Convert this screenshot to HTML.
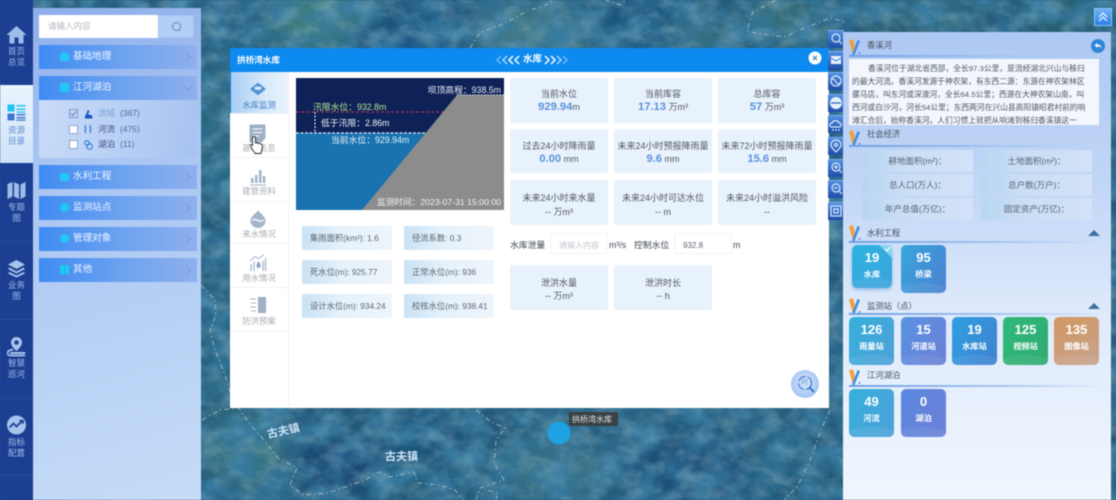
<!DOCTYPE html>
<html lang="zh">
<head>
<meta charset="utf-8">
<title>拱桥湾水库</title>
<style>
*{box-sizing:border-box;margin:0;padding:0}
html,body{width:1116px;height:500px;overflow:hidden;background:#235c80}
body{font-family:"Liberation Sans","Noto Sans CJK SC",sans-serif;position:relative}
#root{position:absolute;left:0;top:0;width:1116px;height:500px;overflow:hidden;filter:blur(.4px)}
.a{position:absolute}
.t{position:absolute;white-space:nowrap}
.nav{position:absolute;left:0;top:0;width:33px;height:500px;background:#1d3f93}
.nl{position:absolute;left:0;width:33px;text-align:center;color:#9dbbe6;font-size:8.5px;line-height:11px}
.nd{position:absolute;left:0;width:33px;height:1px;background:#2c4f9f}
.panel{position:absolute;left:33px;top:8px;width:168px;height:492px;background:linear-gradient(165deg,#8fafec 0%,#a9c5f2 30%,#c6dcf8 100%)}
.mi{position:absolute;left:39px;width:158px;height:24px;background:linear-gradient(90deg,#3f8bf2 0%,#6fa3f0 55%,#8fb0ee 100%);color:#eef6ff;font-size:9.6px;line-height:24px;padding-left:34px}
.mi i{position:absolute;left:21px;top:7px;width:9px;height:9px;background:#20c8f4;border-radius:2px}
.mi svg{position:absolute;right:6px;top:7px}
.cb{position:absolute;left:69px;width:9px;height:9px;background:#fff;border:1px solid #90a5cb}
.li{position:absolute;font-size:8.5px;color:#3a5487;white-space:nowrap;line-height:11px}
.modal{position:absolute;left:230px;top:48px;width:599px;height:360px;background:#fff}
.mh{position:absolute;left:0;top:0;width:599px;height:24px;background:#0c8af0}
.tab{position:absolute;left:0;width:58px;text-align:center;font-size:8.4px;color:#a9adb4;line-height:11px}
.tl{position:absolute;left:1px;width:57px;height:1px;background:#eef0f3}
.s{position:absolute;width:98px;background:#e8f2fc;border-radius:2px;text-align:center;color:#4f5661;font-size:9px;line-height:13px}
.s b{color:#5b92dc;font-size:11.2px;font-weight:700}
.s span{display:block;position:absolute;left:0;width:98px}
.mini{position:absolute;width:90px;height:24px;border-radius:2px;background:linear-gradient(90deg,#c8e2f6 0%,#e6f2fb 45%,#eef5fb 100%);font-size:8.3px;color:#5d6672;line-height:24px;padding-left:8px;white-space:nowrap}
.rp{position:absolute;left:843px;top:32px;width:268px;height:468px;background:linear-gradient(180deg,#adc8f3 0%,#c3d8f7 35%,#dfeafb 60%,#f0f6fe 100%)}
.tool{position:absolute;left:828px;width:16px;height:18px;background:linear-gradient(180deg,#4f8fe0,#1f4da6);border-top:1px solid #7cb0ee}
.hd{position:absolute;left:849px;font-size:8.3px;color:#47505e;white-space:nowrap;padding-left:18px;line-height:12px;height:12px}
.logo{position:absolute;left:849px;width:12px;height:16px}
.ln{position:absolute;left:849px;width:250px;height:1.5px;background:linear-gradient(90deg,#6fa0e4,#a5c4f0 60%,rgba(200,220,250,.2))}
.desc{position:absolute;left:849px;top:59px;width:250px;height:66px;background:#f3f7fd;overflow:hidden}
.desc div{position:absolute;white-space:nowrap;font-size:7.75px;color:#4d5562;line-height:12px}
.rc{position:absolute;height:22px;width:111px;background:linear-gradient(90deg,#b8d6f2 0%,#c9def5 35%,#d3e2f8 100%);color:#59626f;font-size:8.5px;line-height:22px;text-align:center}
.k{position:absolute;width:45px;height:48px;border-radius:5px;color:#fff;text-align:center;overflow:hidden}
.k b{position:absolute;left:0;top:5px;width:100%;font-size:13px;line-height:16px;font-weight:700}
.k span{position:absolute;left:0;top:24px;width:100%;font-size:8.2px;font-weight:700;line-height:12px}
.k:after{content:"";position:absolute;left:-5px;right:-5px;bottom:-8px;height:18px;border-radius:50%;background:rgba(255,255,255,.08)}
.tri{position:absolute;left:1088px;width:0;height:0;border-left:6px solid transparent;border-right:6px solid transparent;border-bottom:6px solid #3f6f9f}
</style>
</head>
<body>
<div id="root">

<!-- MAP -->
<svg class="a" style="left:0;top:0" width="1116" height="500" viewBox="0 0 1116 500">
<defs>
<filter id="bl" x="-30%" y="-30%" width="160%" height="160%"><feGaussianBlur stdDeviation="12"/></filter>
<filter id="tx" x="0" y="0" width="100%" height="100%">
<feTurbulence type="fractalNoise" baseFrequency=".05 .07" numOctaves="4" seed="7"/>
<feColorMatrix values="0 0 0 0 .42  0 0 0 0 .6  0 0 0 0 .62  1.8 0 0 0 -.72"/>
</filter>
<filter id="tx2" x="0" y="0" width="100%" height="100%">
<feTurbulence type="fractalNoise" baseFrequency=".035 .045" numOctaves="3" seed="21"/>
<feColorMatrix values="0 0 0 0 .04  0 0 0 0 .2  0 0 0 0 .36  2 0 0 0 -.6"/>
</filter>
</defs>
<rect width="1116" height="500" fill="#235a7a"/>
<g filter="url(#bl)">
<ellipse cx="320" cy="18" rx="55" ry="32" fill="#3d7d7e"/>
<ellipse cx="405" cy="38" rx="60" ry="22" fill="#15507f"/>
<ellipse cx="530" cy="30" rx="60" ry="22" fill="#457d88"/>
<ellipse cx="440" cy="5" rx="30" ry="20" fill="#1c5882"/>
<ellipse cx="650" cy="20" rx="40" ry="35" fill="#18527e"/>
<ellipse cx="700" cy="35" rx="35" ry="20" fill="#366e80"/>
<ellipse cx="785" cy="20" rx="40" ry="25" fill="#356e7c"/>
<ellipse cx="920" cy="15" rx="70" ry="20" fill="#2c6070"/>
<ellipse cx="1060" cy="14" rx="40" ry="18" fill="#2a6272"/>
<ellipse cx="338" cy="465" rx="42" ry="32" fill="#134673"/>
<ellipse cx="245" cy="450" rx="42" ry="40" fill="#347282"/>
<ellipse cx="430" cy="435" rx="40" ry="28" fill="#1a547c"/>
<ellipse cx="555" cy="470" rx="55" ry="30" fill="#387288"/>
<ellipse cx="690" cy="470" rx="70" ry="30" fill="#1a5078"/>
<ellipse cx="780" cy="440" rx="30" ry="30" fill="#27607f"/>
<ellipse cx="215" cy="120" rx="16" ry="70" fill="#2c667c"/>
<ellipse cx="215" cy="350" rx="16" ry="80" fill="#26627e"/>
</g>
<rect width="1116" height="500" filter="url(#tx2)"/>
<rect width="1116" height="500" filter="url(#tx)" opacity=".4"/>
<g fill="none" stroke="#bcc6c8" stroke-width="1.200" stroke-dasharray="5 3 1.500 3" opacity=".65">
<path d="M470 48L480 33 507 22 529 10 542 7 554 0"/>
<path d="M605 0L620 5 626 0"/>
<path d="M776 0L753 12 747 30 755 33 784 37 805 28 830 18 845 22"/>
<path d="M201 285L215 300 216 315 210 330 215 350 225 375 230 392"/>
<path d="M202 420L220 410 239 408 249 423 264 440 278 458 297 468 290 485 303 495 328 493 365 480 379 472 389 477 414 472 418 483 439 485 455 490 463 500"/>
<path d="M476 500L480 488 504 480 494 463 496 440 505 428 488 420 474 408"/>
<path d="M496 500L498 493 480 488"/>
<path d="M830 410L821 430 809 463 797 487 784 500"/>
</g>
<text x="268" y="438" font-size="11" font-weight="700" fill="#cfe3fb" transform="rotate(-12 268 438)" font-family="Liberation Sans,Noto Sans CJK SC,sans-serif">古夫镇</text>
<text x="385" y="460" font-size="11" font-weight="700" fill="#cfe3fb" font-family="Liberation Sans,Noto Sans CJK SC,sans-serif">古夫镇</text>
<circle cx="559" cy="433" r="11.500" fill="#1fa4e6" opacity=".95"/>
<rect x="569" y="412" width="49" height="14" fill="#3a3a36" opacity=".85"/>
<text x="572" y="422" font-size="8" fill="#e6e6e6" font-family="Liberation Sans,Noto Sans CJK SC,sans-serif">拱桥湾水库</text>
</svg>

<!-- LEFT NAV -->
<div class="nav"></div>
<div class="a" style="left:0;top:85px;width:33px;height:78px;background:linear-gradient(180deg,#eaf3fd,#cfe2f8)"></div>
<div class="nd" style="top:319px"></div>
<div class="nd" style="top:398px"></div>
<div class="nd" style="top:475px"></div>
<div class="nd" style="top:241px"></div>

<svg class="a" style="left:6px;top:25px" width="21" height="19" viewBox="0 0 21 19"><path d="M10.5 1L0.5 10H3.5V18.500H8.500V12.500H12.500V18.500H17.500V10H20.500Z" fill="#9dbde8"/></svg>
<div class="nl" style="top:46px">首页<br>总览</div>

<svg class="a" style="left:7px;top:104px" width="19" height="17" viewBox="0 0 19 17">
<rect x="0.500" y="0.500" width="7" height="7" fill="#1fc4f0"/><rect x="0.500" y="9.500" width="7" height="7" fill="#3f76d8"/>
<path d="M9.500 1h9v1.500h-9zM9.500 4.500h9v1.500h-9zM9.500 7.500h9v1.200h-9z" fill="#2bc2ee"/>
<path d="M9.500 10h9v1.500h-9zM9.500 13h9v1.500h-9zM9.500 15.500h9v1.200h-9z" fill="#3f76d8"/></svg>
<div class="nl" style="top:125px;color:#5f8fd0">资源<br>目录</div>

<svg class="a" style="left:7px;top:181px" width="19" height="19" viewBox="0 0 19 19"><path d="M0.500 3L5.500 1V15.500L0.500 18ZM7 1L12 3.500V18L7 15.500ZM13.500 3.500L18.500 1V15.500L13.500 18Z" fill="#9dbde8"/></svg>
<div class="nl" style="top:202px">专题<br>图</div>

<svg class="a" style="left:7px;top:259px" width="19" height="19" viewBox="0 0 19 19"><path d="M9.500 1L18 5.500 9.500 10 1 5.500Z" fill="#a6c4ec"/><path d="M2.500 8.500L9.500 12.500 16.500 8.500 18 10 9.500 14.500 1 10ZM2.500 13L9.500 16.500 16.500 13 18 14.500 9.500 18.500 1 14.500Z" fill="#a6c4ec"/></svg>
<div class="nl" style="top:280px">业务<br>图</div>

<svg class="a" style="left:7px;top:336px" width="19" height="21" viewBox="0 0 19 21"><path d="M9.500 1a5.500 5.500 0 0 0-5.500 5.500C4 10.500 9.500 15 9.500 15S15 10.500 15 6.500A5.500 5.500 0 0 0 9.500 1Zm0 3.200a2.300 2.300 0 1 1 0 4.600 2.300 2.300 0 0 1 0-4.600Z" fill="#a6c4ec"/><path d="M6 13.500C2 14 0.500 15.500 0.500 17c0 1.500 1.500 2.500 3 2.500H18" fill="none" stroke="#a6c4ec" stroke-width="1.800"/><rect x="3" y="16" width="15.500" height="2" rx="1" fill="#a6c4ec"/></svg>
<div class="nl" style="top:358px">智慧<br>巡河</div>

<svg class="a" style="left:7px;top:415px" width="19" height="20" viewBox="0 0 19 20"><circle cx="9.500" cy="10" r="9.500" fill="#a6c4ec"/><path d="M2.500 12.500L6.500 8.500 9.500 11.500 15 6" fill="none" stroke="#1d3f93" stroke-width="1.800"/><path d="M12.500 5.500H16V9" fill="none" stroke="#1d3f93" stroke-width="1.500"/></svg>
<div class="nl" style="top:437px">指标<br>配置</div>

<!-- LEFT PANEL -->
<div class="panel"></div>
<div class="a" style="left:39px;top:15px;width:119px;height:23px;background:#fff"></div>
<div class="t" style="left:48px;top:20px;font-size:8.500px;color:#b3b8c0;line-height:12px">请输入内容</div>
<div class="a" style="left:158px;top:15px;width:36px;height:23px;background:#b4cff5;border:1px solid #a4c0ec"></div>
<svg class="a" style="left:171px;top:21px" width="11" height="11" viewBox="0 0 11 11"><circle cx="5.500" cy="5.500" r="4" fill="none" stroke="#5f8bc8" stroke-width="1"/><path d="M8 8.500L9.500 10" stroke="#5f8bc8"/></svg>

<div class="mi" style="top:45px"><i style="border-radius:50% 50% 2px 2px"></i>基础地理<svg width="6" height="10" viewBox="0 0 6 10"><path d="M1 1L5 5 1 9" fill="none" stroke="#7d9dd2" stroke-width="1.200"/></svg></div>
<div class="mi" style="top:76px"><i></i>江河湖泊<svg style="top:9px;right:4px" width="10" height="6" viewBox="0 0 10 6"><path d="M1 1L5 5 9 1" fill="none" stroke="#7d9dd2" stroke-width="1.200"/></svg></div>
<div class="a" style="left:39px;top:100px;width:158px;height:58px;background:linear-gradient(100deg,#c9dcf8,#b2cbf3 70%,#a7c2f0)"></div>
<div class="cb" style="top:109px;background:#c3d7f5;border-color:#7d97c8"></div>
<svg class="a" style="left:70px;top:110px" width="7" height="7" viewBox="0 0 7 7"><path d="M1 3.500L3 5.500 6 1.500" fill="none" stroke="#5478b4" stroke-width=".9"/></svg>
<div class="cb" style="top:125px"></div>
<div class="cb" style="top:140px"></div>
<svg class="a" style="left:84px;top:109px" width="9" height="10" viewBox="0 0 9 10"><path d="M4 0.500L5.500 3 3.500 5 8 6.500 8.500 9.500H0.500L2 5.500Z" fill="#1556c0"/></svg>
<svg class="a" style="left:84px;top:124px" width="9" height="10" viewBox="0 0 9 10"><path d="M2 1L0.800 3 2 5 0.800 7 2 9M7 1L5.800 3 7 5 5.800 7 7 9" fill="none" stroke="#2f6fcf" stroke-width="1.100"/></svg>
<svg class="a" style="left:84px;top:140px" width="9" height="10" viewBox="0 0 9 10"><circle cx="3" cy="3" r="2.300" fill="none" stroke="#2f7fd8" stroke-width="1.100"/><circle cx="5.500" cy="6.500" r="2.800" fill="none" stroke="#2f7fd8" stroke-width="1.100"/></svg>
<div class="li" style="left:98px;top:108px;color:#7ba0d8">流域<span style="color:#4a6aa5;margin-left:5px">(367)</span></div>
<div class="li" style="left:98px;top:124px">河流<span style="color:#4a6aa5;margin-left:5px">(475)</span></div>
<div class="li" style="left:98px;top:139px">湖泊<span style="color:#4a6aa5;margin-left:5px">(11)</span></div>

<div class="mi" style="top:165px"><i style="height:8px;top:8px"></i>水利工程<svg width="6" height="10" viewBox="0 0 6 10"><path d="M1 1L5 5 1 9" fill="none" stroke="#7d9dd2" stroke-width="1.200"/></svg></div>
<div class="mi" style="top:196px"><i style="border-radius:50%"></i>监测站点<svg width="6" height="10" viewBox="0 0 6 10"><path d="M1 1L5 5 1 9" fill="none" stroke="#7d9dd2" stroke-width="1.200"/></svg></div>
<div class="mi" style="top:227px"><i style="border-radius:50%"></i>管理对象<svg width="6" height="10" viewBox="0 0 6 10"><path d="M1 1L5 5 1 9" fill="none" stroke="#7d9dd2" stroke-width="1.200"/></svg></div>
<div class="mi" style="top:258px"><i style="background:repeating-linear-gradient(90deg,#15d0f0 0 4px,transparent 4px 5px)"></i>其他<svg width="6" height="10" viewBox="0 0 6 10"><path d="M1 1L5 5 1 9" fill="none" stroke="#7d9dd2" stroke-width="1.200"/></svg></div>

<!-- MODAL -->
<div class="modal">
<div class="mh"></div>
<div class="t" style="left:7px;top:6px;font-size:8.600px;font-weight:700;color:#fff;line-height:13px">拱桥湾水库</div>
<svg class="a" style="left:265px;top:7px" width="76" height="10" viewBox="0 0 76 10" fill="none" stroke-width="1.500">
<path d="M6 1L2 5 6 9" stroke="#6db8f6"/><path d="M12 1L8 5 12 9" stroke="#a8d6fb"/><path d="M18 1L14 5 18 9" stroke="#fff"/><path d="M24 1L20 5 24 9" stroke="#fff"/>
<path d="M50 1L54 5 50 9" stroke="#fff"/><path d="M56 1L60 5 56 9" stroke="#fff"/><path d="M62 1L66 5 62 9" stroke="#a8d6fb"/><path d="M68 1L72 5 68 9" stroke="#6db8f6"/>
</svg>
<div class="t" style="left:293px;top:5px;font-size:9.500px;font-weight:700;color:#fff;line-height:14px">水库</div>
<svg class="a" style="left:578px;top:3px" width="14" height="14" viewBox="0 0 14 14"><circle cx="7" cy="7" r="6.500" fill="#fff"/><path d="M5 5L9 9M9 5L5 9" stroke="#3a7fc8" stroke-width="1.200"/></svg>

<!-- tabs -->
<div class="a" style="left:0;top:24px;width:59px;height:336px;border-right:1px solid #eef1f5"></div>
<div class="a" style="left:0;top:24px;width:58px;height:41px;background:linear-gradient(90deg,#a8cef5,#d8e9fb 60%,#eaf3fd);border-left:1px solid #1f7fe0"></div>
<svg class="a" style="left:20px;top:34px" width="16" height="14" viewBox="0 0 20 16"><path d="M10 0L20 8 10 16 0 8Z" fill="#4f95d8"/><rect x="6" y="5" width="8" height="4" rx="1" fill="#d9ecfb"/></svg>
<div class="tab" style="top:52px;color:#3f7fc4">水库监测</div>
<div class="tl" style="top:65px"></div>
<svg class="a" style="left:19px;top:76px" width="17" height="19" viewBox="0 0 17 19"><path d="M1.500 0.500h14a1 1 0 0 1 1 1V14l-4 4.500H1.500a1 1 0 0 1-1-1V1.500a1 1 0 0 1 1-1Z" fill="#9db0c6"/><path d="M3.500 5h10M3.500 8.500h10M3.500 12h7" stroke="#fff" stroke-width="1.100"/></svg>
<div class="tab" style="top:95px">基本信息</div>
<div class="tl" style="top:109px"></div>
<svg class="a" style="left:20px;top:120px" width="16" height="18" viewBox="0 0 16 18"><path d="M1 10h2.500v5H1zM5 7h2.500v8H5zM9 2h2.500v13H9zM12.800 8h2.500v7h-2.500z" fill="#9fb4cc"/><path d="M0 17h16" stroke="#9fb4cc"/></svg>
<div class="tab" style="top:138px">建管资料</div>
<div class="tl" style="top:153px"></div>
<svg class="a" style="left:19px;top:162px" width="18" height="18" viewBox="0 0 18 18"><path d="M9 0.500C6 4 1.500 6.500 1.500 11a7.500 7 0 0 0 15 0C16.500 6.500 12 4 9 0.500Z" fill="#a5b6ca"/><path d="M3.500 10.500c2-2 3.500-1 5.500 0s3.500 1 5.500-.5" fill="none" stroke="#fff" stroke-width="1.300"/></svg>
<div class="tab" style="top:181px">来水情况</div>
<div class="tl" style="top:195px"></div>
<svg class="a" style="left:19px;top:205px" width="18" height="19" viewBox="0 0 18 19"><path d="M2 18V11M5 18V8.500M14 18V8M16.500 18V5" stroke="#a5b6ca" stroke-width="1.300" fill="none"/><path d="M1 8L6 3.500 9.500 5.500 15 1.500" fill="none" stroke="#a5b6ca"/><path d="M9.500 8C8.500 10 7.500 11 7.500 13a2 2 0 0 0 4 0C11.500 11 10.500 10 9.500 8Z" fill="#8fa3bb"/></svg>
<div class="tab" style="top:225px">用水情况</div>
<div class="tl" style="top:239px"></div>
<svg class="a" style="left:19px;top:248px" width="18" height="18" viewBox="0 0 18 18"><rect x="9" y="1" width="8" height="16" fill="#9eb1c6"/><path d="M1 3h6M2 7h5M1 11h6M2 15h5" stroke="#a8b8ca"/></svg>
<div class="tab" style="top:268px">防洪预案</div>
<div class="tl" style="top:283px"></div>
<svg class="a" style="left:19px;top:87px" width="17" height="20" viewBox="0 0 17 20"><path d="M5 1.500c1 0 1.500.8 1.500 1.600V8c.8-.5 1.800-.4 2.300.3.700-.4 1.800-.2 2.200.6.800-.3 2 .1 2.200 1.100.3 1.800.1 4-.7 5.700l-.6 2.800H6.200L3 14 1.300 10.800c-.4-.9.600-1.700 1.400-1.100L3.500 10.500V3.100C3.500 2.300 4 1.500 5 1.500Z" fill="#fff" stroke="#222" stroke-width=".9"/></svg>

<!-- diagram -->
<div class="a" style="left:66px;top:30px;width:208px;height:132px;background:#0e2258;overflow:hidden">
<div class="a" style="left:0;top:55px;width:208px;height:77px;background:#1873b0"></div>
<svg class="a" style="left:0;top:0" width="208" height="132" viewBox="0 0 208 132">
<path d="M161 17H208V132H66Z" fill="#8c8c8c"/>
<path d="M161 17H208" stroke="#cfd3d6" stroke-width="1" stroke-dasharray="2 1"/>
<path d="M0 34H147" stroke="#c23a5a" stroke-width="1" stroke-dasharray="3 2"/>
<path d="M0 55H130" stroke="#d5e4f2" stroke-width="1.200" stroke-dasharray="3 1.500"/>
<path d="M19 34V55" stroke="#fff" stroke-width="1" stroke-dasharray="2 1.500"/>
</svg>
<div class="t" style="right:3px;top:6px;font-size:8.800px;color:#e8ecf2;line-height:12px">坝顶高程：938.5m</div>
<div class="t" style="left:17px;top:23px;font-size:8.800px;color:#b9e58a;line-height:12px">汛限水位：932.8m</div>
<div class="t" style="left:25px;top:39px;font-size:8.800px;color:#f2f5f8;line-height:12px">低于汛限：2.86m</div>
<div class="t" style="left:35px;top:56px;font-size:8.800px;color:#e8f2fa;line-height:12px">当前水位：929.94m</div>
<div class="t" style="right:3px;top:118px;font-size:8.700px;color:#eef2f5;line-height:12px">监测时间：2023-07-31 15:00:00</div>
</div>

<!-- mini -->
<div class="mini" style="left:72px;top:178px">集雨面积(km²): 1.6</div>
<div class="mini" style="left:174px;top:178px">径流系数: 0.3</div>
<div class="mini" style="left:72px;top:212px">死水位(m): 925.77</div>
<div class="mini" style="left:174px;top:212px">正常水位(m): 936</div>
<div class="mini" style="left:72px;top:246px">设计水位(m): 934.24</div>
<div class="mini" style="left:174px;top:246px">校核水位(m): 938.41</div>

<!-- stats -->
<div class="s" style="left:280px;top:30px;height:45px"><span style="top:10px">当前水位</span><span style="top:23px"><b>929.94</b>m</span></div>
<div class="s" style="left:384px;top:30px;height:45px"><span style="top:10px">当前库容</span><span style="top:23px"><b>17.13</b> 万m³</span></div>
<div class="s" style="left:488px;top:30px;height:45px"><span style="top:10px">总库容</span><span style="top:23px"><b>57</b> 万m³</span></div>
<div class="s" style="left:280px;top:81px;height:44px"><span style="top:11px">过去24小时降雨量</span><span style="top:24px"><b>0.00</b> mm</span></div>
<div class="s" style="left:384px;top:81px;height:44px"><span style="top:11px">未来24小时预报降雨量</span><span style="top:24px"><b>9.6</b> mm</span></div>
<div class="s" style="left:488px;top:81px;height:44px"><span style="top:11px">未来72小时预报降雨量</span><span style="top:24px"><b>15.6</b> mm</span></div>
<div class="s" style="left:280px;top:132px;height:45px"><span style="top:12px">未来24小时来水量</span><span style="top:26px">-- 万m³</span></div>
<div class="s" style="left:384px;top:132px;height:45px"><span style="top:12px">未来24小时可达水位</span><span style="top:26px">-- m</span></div>
<div class="s" style="left:488px;top:132px;height:45px"><span style="top:12px">未来24小时溢洪风险</span><span style="top:26px">--</span></div>

<!-- control -->
<div class="t" style="left:280px;top:191px;font-size:8.800px;color:#3f4650;line-height:13px">水库泄量</div>
<div class="a" style="left:320px;top:185px;width:58px;height:21px;border:1px solid #f1f3f6;border-radius:2px"></div>
<div class="t" style="left:329px;top:191px;font-size:8px;color:#c0c4cb;line-height:13px">请输入内容</div>
<div class="t" style="left:379px;top:191px;font-size:8.800px;color:#3f4650;line-height:13px">m³/s</div>
<div class="t" style="left:404px;top:191px;font-size:8.800px;color:#3f4650;line-height:13px">控制水位</div>
<div class="a" style="left:444px;top:185px;width:58px;height:21px;border:1px solid #f1f3f6;border-radius:2px"></div>
<div class="t" style="left:453px;top:191px;font-size:8px;color:#5a616b;line-height:13px">932.8</div>
<div class="t" style="left:503px;top:191px;font-size:8.800px;color:#3f4650;line-height:13px">m</div>

<div class="s" style="left:280px;top:217px;height:45px"><span style="top:12px">泄洪水量</span><span style="top:25px">-- 万m³</span></div>
<div class="s" style="left:384px;top:217px;height:45px"><span style="top:12px">泄洪时长</span><span style="top:25px">-- h</span></div>

<div class="a" style="left:561px;top:322px;width:28px;height:28px;border-radius:50%;background:radial-gradient(circle at 50% 45%,#dcebfd,#8fb3ee)"></div>
<svg class="a" style="left:566px;top:326px" width="20" height="20" viewBox="0 0 20 20"><circle cx="9" cy="9" r="6.500" fill="none" stroke="#3f7fc8" stroke-width="1.200" stroke-dasharray="9 2"/><path d="M13.500 13.500L18 18" stroke="#2f6fc0" stroke-width="1.800"/></svg>
<div class="t" style="left:571px;top:330px;font-size:6.500px;color:#3f7fc8;line-height:10px">问</div>
</div>

<!-- TOOL STRIP -->
<div class="tool" style="top:30px"></div>
<div class="tool" style="top:51px;height:19px"></div>
<div class="tool" style="top:72px"></div>
<div class="tool" style="top:94px"></div>
<div class="tool" style="top:115px"></div>
<div class="tool" style="top:137px"></div>
<div class="tool" style="top:159px"></div>
<div class="tool" style="top:180px"></div>
<div class="tool" style="top:202px"></div>
<svg class="a" style="left:828px;top:30px" width="16" height="192" viewBox="0 0 16 192" fill="none" stroke="#d8e8fb" stroke-width="1.200">
<circle cx="8" cy="8" r="4"/><path d="M11 11L14 14"/>
<rect x="3" y="26" width="10" height="8" fill="#e8f2fd" stroke="none"/><path d="M3 28L8 31 13 28" stroke="#4f8fe0"/>
<circle cx="8" cy="51" r="5"/><path d="M4 49c2 0 3 1 4 3s2 2 4 1"/>
<circle cx="8" cy="73" r="5.500" fill="#e8f2fd"/><path d="M3 73h10" stroke="#2d5fb8"/>
<path d="M4 97c-3 0-3-4 0-4 1-3 6-3 7 0 3 0 3 4 0 4Z"/><path d="M5 99v2M8 99v2M11 99v2"/>
<path d="M8 122c-3-3-5-5-5-7a5 5 0 0 1 10 0c0 2-2 4-5 7Z"/><circle cx="8" cy="115" r="1.500"/>
<circle cx="8" cy="137" r="4"/><path d="M11 140L14 143M6 137h4M8 135v4"/>
<circle cx="8" cy="158" r="4"/><path d="M11 161L14 164M6 158h4"/>
<rect x="3" y="176" width="10" height="10"/><rect x="6" y="179" width="4" height="4"/>
</svg>

<!-- TOP RIGHT BUTTON -->
<div class="a" style="left:1094px;top:8px;width:18px;height:18px;background:linear-gradient(180deg,#6cb2f5,#2a7fe8);border:1px solid #8cc4f7"></div>
<svg class="a" style="left:1098px;top:12px" width="10" height="10" viewBox="0 0 10 10"><path d="M1 5L5 1 9 5M1 9L5 5 9 9" fill="none" stroke="#fff" stroke-width="1.100"/></svg>

<!-- RIGHT PANEL -->
<div class="rp"></div>

<svg class="logo" style="top:39px" viewBox="0 0 12 16"><path d="M0 1.500L4 0 6.500 10 4 16Z" fill="#f0a040"/><path d="M8.500 1L11 2 5.500 16H3Z" fill="#3d8fe8"/><circle cx="10.500" cy="14" r="1" fill="#3d8fe8"/></svg>
<div class="hd" style="top:39px">香溪河</div>
<div class="ln" style="top:55px;width:250px"></div>
<svg class="a" style="left:1091px;top:39px" width="14" height="14" viewBox="0 0 14 14"><circle cx="7" cy="7" r="7" fill="#2f86d8"/><path d="M6.500 4L3.500 6.500 6.500 9V7.300C8.500 7.300 9.500 8 10.500 9.500 10.300 7 9 5.500 6.500 5.500Z" fill="#fff"/></svg>

<div class="desc">
<div style="left:19px;top:4px">香溪河位于湖北省西部，全长97.3公里，是流经湖北兴山与秭归</div>
<div style="left:3px;top:17px">的最大河流。香溪河发源于神农架，有东西二源：东源在神农架林区</div>
<div style="left:3px;top:30px">骡马店，叫东河或深渡河，全长64.5公里；西源在大神农架山南，叫</div>
<div style="left:3px;top:43px">西河或白沙河，河长54公里；东西两河在兴山县高阳镇昭君村前的响</div>
<div style="left:3px;top:56px">滩汇合后，始称香溪河。人们习惯上就把从响滩到秭归香溪镇这一</div>
</div>

<svg class="logo" style="top:130px" viewBox="0 0 12 16"><path d="M0 1.500L4 0 6.500 10 4 16Z" fill="#f0a040"/><path d="M8.500 1L11 2 5.500 16H3Z" fill="#3d8fe8"/><circle cx="10.500" cy="14" r="1" fill="#3d8fe8"/></svg>
<div class="hd" style="top:128px">社会经济</div>
<div class="ln" style="top:145px"></div>

<div class="rc" style="left:862px;top:150px">耕地面积(m²)：</div>
<div class="rc" style="left:981px;top:150px">土地面积(m²)：</div>
<div class="rc" style="left:862px;top:174px">总人口(万人)：</div>
<div class="rc" style="left:981px;top:174px">总户数(万户)：</div>
<div class="rc" style="left:862px;top:198px">年产总值(万亿)：</div>
<div class="rc" style="left:981px;top:198px">固定资产(万亿)：</div>

<svg class="logo" style="top:225px" viewBox="0 0 12 16"><path d="M0 1.500L4 0 6.500 10 4 16Z" fill="#f0a040"/><path d="M8.500 1L11 2 5.500 16H3Z" fill="#3d8fe8"/><circle cx="10.500" cy="14" r="1" fill="#3d8fe8"/></svg>
<div class="hd" style="top:227px">水利工程</div>
<div class="ln" style="top:241px"></div>
<div class="tri" style="top:230px"></div>

<div class="k" style="left:852px;top:245px;width:40px;height:43px;background:linear-gradient(150deg,#2db4e0,#3aa2dc);box-shadow:0 2px 3px rgba(60,130,200,.4)"><b>19</b><span>水库</span></div>
<svg class="a" style="left:876px;top:245px" width="16" height="14" viewBox="0 0 16 14"><path d="M3 0H12a4 4 0 0 1 4 4V13Z" fill="#7fd4f0"/><path d="M9 4L11 6 14 2" fill="none" stroke="#fff" stroke-width="1.200"/></svg>
<div class="k" style="left:901px;top:245px;background:linear-gradient(120deg,#38a6de,#4a80cf)"><b>95</b><span>桥梁</span></div>

<svg class="logo" style="top:298px" viewBox="0 0 12 16"><path d="M0 1.500L4 0 6.500 10 4 16Z" fill="#f0a040"/><path d="M8.500 1L11 2 5.500 16H3Z" fill="#3d8fe8"/><circle cx="10.500" cy="14" r="1" fill="#3d8fe8"/></svg>
<div class="hd" style="top:300px">监测站（点）</div>
<div class="ln" style="top:313px"></div>
<div class="tri" style="top:303px"></div>

<div class="k" style="left:849px;top:317px;background:linear-gradient(120deg,#36b0dc,#4da0d8)"><b>126</b><span>雨量站</span></div>
<div class="k" style="left:901px;top:317px;background:linear-gradient(120deg,#5a92e2,#6b80d6)"><b>15</b><span>河道站</span></div>
<div class="k" style="left:952px;top:317px;background:linear-gradient(120deg,#2fa0e2,#3f80cf)"><b>19</b><span>水库站</span></div>
<div class="k" style="left:1003px;top:317px;background:linear-gradient(120deg,#2fb97a,#2faa72)"><b>125</b><span>视频站</span></div>
<div class="k" style="left:1054px;top:317px;background:linear-gradient(150deg,#d2975f,#c6a490)"><b>135</b><span>图像站</span></div>

<svg class="logo" style="top:369px" viewBox="0 0 12 16"><path d="M0 1.500L4 0 6.500 10 4 16Z" fill="#f0a040"/><path d="M8.500 1L11 2 5.500 16H3Z" fill="#3d8fe8"/><circle cx="10.500" cy="14" r="1" fill="#3d8fe8"/></svg>
<div class="hd" style="top:369px">江河湖泊</div>
<div class="ln" style="top:385px"></div>

<div class="k" style="left:849px;top:389px;background:linear-gradient(120deg,#36b0dc,#4da0d8)"><b>49</b><span>河流</span></div>
<div class="k" style="left:901px;top:389px;background:linear-gradient(120deg,#5a88e0,#6b80d6)"><b>0</b><span>湖泊</span></div>

</div>
</body>
</html>
